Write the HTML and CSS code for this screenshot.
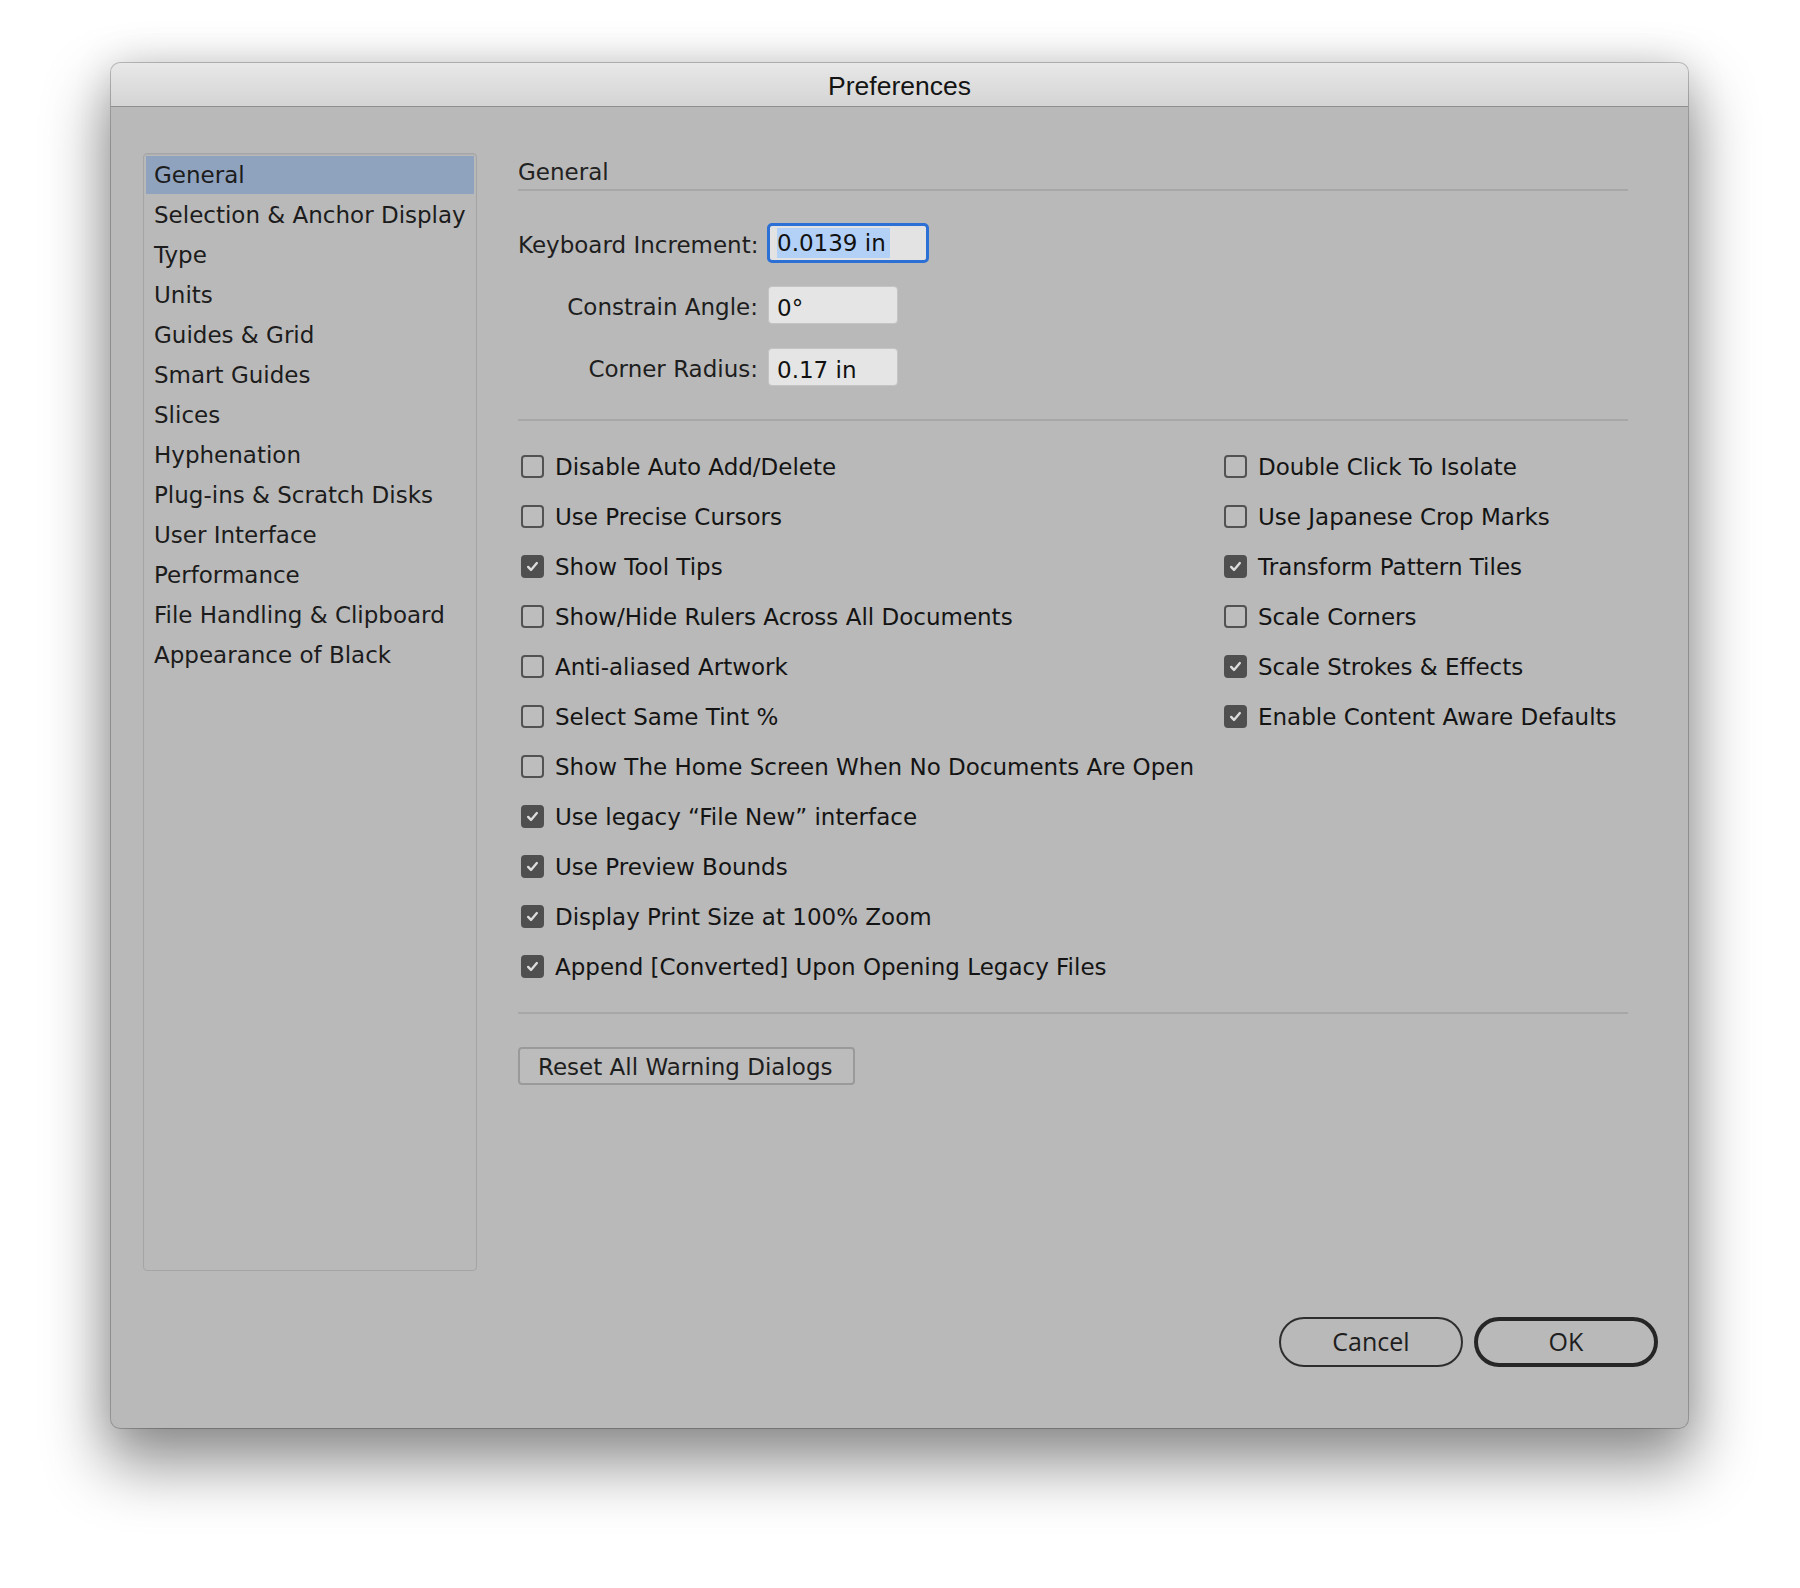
FILE: index.html
```html
<!DOCTYPE html>
<html lang="en">
<head>
<meta charset="utf-8">
<title>Preferences</title>
<link rel="stylesheet" href="styles.css">
</head>
<body>
<div class="page">
  <div class="window">
    <div class="titlebar">Preferences</div>
    <div class="main">
      <ul class="sidebar">
        <li class="nav-item is-selected">General</li>
        <li class="nav-item">Selection &amp; Anchor Display</li>
        <li class="nav-item">Type</li>
        <li class="nav-item">Units</li>
        <li class="nav-item">Guides &amp; Grid</li>
        <li class="nav-item">Smart Guides</li>
        <li class="nav-item">Slices</li>
        <li class="nav-item">Hyphenation</li>
        <li class="nav-item">Plug-ins &amp; Scratch Disks</li>
        <li class="nav-item">User Interface</li>
        <li class="nav-item">Performance</li>
        <li class="nav-item">File Handling &amp; Clipboard</li>
        <li class="nav-item">Appearance of Black</li>
      </ul>
      <div class="content">
        <div class="section-title">General</div>
        <div class="rule"></div>
        <div class="fields">
          <div class="field">
            <span class="field-label">Keyboard Increment:</span>
            <div class="input input-focus"><span class="selected-text">0.0139 in</span></div>
          </div>
          <div class="field">
            <span class="field-label">Constrain Angle:</span>
            <div class="input">0°</div>
          </div>
          <div class="field">
            <span class="field-label">Corner Radius:</span>
            <div class="input">0.17 in</div>
          </div>
        </div>
        <div class="rule rule-options"></div>
        <div class="options">
          <div class="col col-left">
            <div class="opt"><span class="box"></span><span class="opt-label">Disable Auto Add/Delete</span></div>
            <div class="opt"><span class="box"></span><span class="opt-label">Use Precise Cursors</span></div>
            <div class="opt"><span class="box checked"><svg viewBox="0 0 24 24"><path d="M6.5 12.5l3.6 3.8 7.4-8.6"/></svg></span><span class="opt-label">Show Tool Tips</span></div>
            <div class="opt"><span class="box"></span><span class="opt-label">Show/Hide Rulers Across All Documents</span></div>
            <div class="opt"><span class="box"></span><span class="opt-label">Anti-aliased Artwork</span></div>
            <div class="opt"><span class="box"></span><span class="opt-label">Select Same Tint %</span></div>
            <div class="opt"><span class="box"></span><span class="opt-label">Show The Home Screen When No Documents Are Open</span></div>
            <div class="opt"><span class="box checked"><svg viewBox="0 0 24 24"><path d="M6.5 12.5l3.6 3.8 7.4-8.6"/></svg></span><span class="opt-label">Use legacy “File New” interface</span></div>
            <div class="opt"><span class="box checked"><svg viewBox="0 0 24 24"><path d="M6.5 12.5l3.6 3.8 7.4-8.6"/></svg></span><span class="opt-label">Use Preview Bounds</span></div>
            <div class="opt"><span class="box checked"><svg viewBox="0 0 24 24"><path d="M6.5 12.5l3.6 3.8 7.4-8.6"/></svg></span><span class="opt-label">Display Print Size at 100% Zoom</span></div>
            <div class="opt"><span class="box checked"><svg viewBox="0 0 24 24"><path d="M6.5 12.5l3.6 3.8 7.4-8.6"/></svg></span><span class="opt-label">Append [Converted] Upon Opening Legacy Files</span></div>
          </div>
          <div class="col col-right">
            <div class="opt"><span class="box"></span><span class="opt-label">Double Click To Isolate</span></div>
            <div class="opt"><span class="box"></span><span class="opt-label">Use Japanese Crop Marks</span></div>
            <div class="opt"><span class="box checked"><svg viewBox="0 0 24 24"><path d="M6.5 12.5l3.6 3.8 7.4-8.6"/></svg></span><span class="opt-label">Transform Pattern Tiles</span></div>
            <div class="opt"><span class="box"></span><span class="opt-label">Scale Corners</span></div>
            <div class="opt"><span class="box checked"><svg viewBox="0 0 24 24"><path d="M6.5 12.5l3.6 3.8 7.4-8.6"/></svg></span><span class="opt-label">Scale Strokes &amp; Effects</span></div>
            <div class="opt"><span class="box checked"><svg viewBox="0 0 24 24"><path d="M6.5 12.5l3.6 3.8 7.4-8.6"/></svg></span><span class="opt-label">Enable Content Aware Defaults</span></div>
          </div>
        </div>
        <div class="rule rule-reset"></div>
        <button class="btn-reset" type="button">Reset All Warning Dialogs</button>
      </div>
    </div>
    <div class="footer">
      <button class="pill" type="button">Cancel</button>
      <button class="pill pill-default" type="button">OK</button>
    </div>
  </div>
</div>
</body>
</html>
```
FILE: styles.css
```css
* { box-sizing: border-box; }

html, body {
  margin: 0;
  padding: 0;
  background: #ffffff;
}

body {
  width: 1800px;
  height: 1588px;
  overflow: hidden;
  font-family: "DejaVu Sans", "Liberation Sans", sans-serif;
  font-size: 23px;
  color: #161616;
}

.page {
  padding: 63px 0 0 111px;
}

.window {
  width: 1577px;
  height: 1365px;
  background: #b9b9b9;
  border-radius: 9px;
  overflow: hidden;
  display: flex;
  flex-direction: column;
  box-shadow:
    0 0 0 1px rgba(0, 0, 0, 0.22),
    0 32px 62px 6px rgba(0, 0, 0, 0.42),
    0 0 40px rgba(0, 0, 0, 0.12);
}

.titlebar {
  height: 44px;
  flex: none;
  padding-top: 2px;
  line-height: 43px;
  text-align: center;
  font-family: "Liberation Sans", Arial, sans-serif;
  font-size: 26.5px;
  color: #141414;
  background: linear-gradient(#e8e8e8, #d4d4d4);
  border-bottom: 1px solid #8e8e8e;
}

.main {
  flex: none;
  display: flex;
  padding: 46px 0 0 32px;
}

.sidebar {
  list-style: none;
  margin: 0;
  padding: 2px;
  width: 334px;
  height: 1118px;
  flex: none;
  border: 1px solid #a5a5a5;
  border-radius: 4px;
  background: #b9b9b9;
  box-shadow: inset 0 1px 1px rgba(0, 0, 0, 0.06);
}

.nav-item {
  height: 38px;
  line-height: 38px;
  margin-bottom: 2px;
  padding-left: 8px;
  white-space: nowrap;
  color: #1c1c1c;
}

.nav-item.is-selected {
  background: #8fa3bf;
}

.content {
  margin-left: 41px;
  width: 1110px;
  display: flex;
  flex-direction: column;
  align-items: flex-start;
}

.section-title {
  padding-top: 4px;
  line-height: 30px;
  color: #222222;
}

.rule {
  align-self: stretch;
  height: 2px;
  margin-top: 2px;
  background: #a7a7a7;
}

.fields {
  margin-top: 32px;
  display: flex;
  flex-direction: column;
  gap: 22px;
}

.field {
  height: 40px;
  display: flex;
  align-items: center;
}

.field-label {
  width: 240px;
  text-align: right;
  margin-right: 10px;
  padding-top: 3px;
  white-space: nowrap;
  color: #1e1e1e;
}

.input {
  width: 130px;
  height: 38px;
  line-height: 38px;
  padding: 2px 0 0 8px;
  background: #e5e5e5;
  border: 1px solid #c4c4c4;
  border-radius: 4px;
  color: #111111;
  white-space: nowrap;
}

.input-focus {
  width: 162px;
  height: 40px;
  margin-left: -1px;
  padding: 0 0 0 7px;
  line-height: 34px;
  border: 3px solid #2c6fd5;
  border-radius: 5px;
  background: #e3e3e3;
}

.selected-text {
  display: inline-block;
  line-height: 29px;
  padding: 1px 4px 0 0;
  margin-top: 2px;
  vertical-align: top;
  background: #b3d1f6;
}

.rule-options {
  margin-top: 32px;
}

.options {
  margin-top: 20px;
  align-self: stretch;
  display: grid;
  grid-template-columns: 703px 1fr;
}

.col {
  display: flex;
  flex-direction: column;
}

.opt {
  height: 50px;
  display: flex;
  align-items: center;
  padding-left: 3px;
  white-space: nowrap;
}

.box {
  width: 23px;
  height: 23px;
  flex: none;
  margin-right: 11px;
  border: 2px solid #525252;
  border-radius: 4px;
  background: #bdbdbd;
  display: flex;
  align-items: center;
  justify-content: center;
}

.box.checked {
  background: #4f4f4f;
  border-color: #4f4f4f;
}

.box svg {
  width: 21px;
  height: 21px;
  fill: none;
  stroke: #dcdcdc;
  stroke-width: 3;
  stroke-linecap: round;
  stroke-linejoin: round;
}

.opt-label {
  padding-top: 2px;
  color: #141414;
}

.rule-reset {
  margin-top: 21px;
}

.btn-reset {
  margin-top: 33px;
  width: 337px;
  height: 38px;
  padding: 2px 0 0 18px;
  text-align: left;
  font-family: "DejaVu Sans", "Liberation Sans", sans-serif;
  font-size: 23px;
  color: #1e1e1e;
  background: #bcbcbc;
  border: 2px solid #9a9a9a;
  border-radius: 4px;
}

.footer {
  flex: none;
  display: flex;
  justify-content: flex-end;
  gap: 11px;
  padding: 46px 30px 61px 0;
}

.pill {
  width: 184px;
  height: 50px;
  border: 2px solid #2e2e2e;
  border-radius: 25px;
  background: transparent;
  font-family: "Open Sans", "Liberation Sans", sans-serif;
  font-size: 25px;
  color: #1e1e1e;
  padding: 0 0 2px 0;
}

.pill-default {
  border-width: 4px;
  border-color: #262626;
}
```
